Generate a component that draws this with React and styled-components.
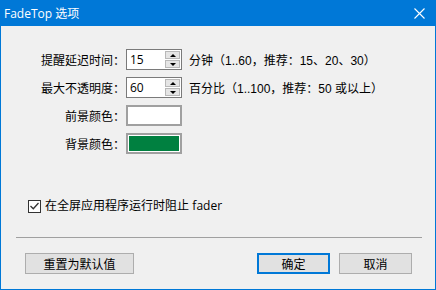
import styled, { createGlobalStyle } from "styled-components";

const GlobalStyle = createGlobalStyle`
  html, body {
    margin: 0;
    padding: 0;
    background: #f0f0f0;
  }
  body {
    font-family: "Liberation Sans", "Noto Sans CJK SC", sans-serif;
    font-size: 12px;
    color: #000;
  }
`;

const Window = styled.div`
  width: 436px;
  height: 290px;
  box-sizing: border-box;
  background: #f0f0f0;
  border: 1px solid #0078d7;
  border-top: none;
  display: flex;
  flex-direction: column;
  overflow: hidden;
`;

const TitleBar = styled.div`
  height: 26px;
  margin: 0 -1px;
  background: #0078d7;
  color: #fff;
  display: flex;
  align-items: center;
  justify-content: space-between;
  padding: 0 11px 0 4px;
  font-family: "Open Sans", "Noto Sans CJK SC", sans-serif;
  font-size: 12px;
  flex-shrink: 0;
`;

const CloseButton = styled.svg`
  width: 11px;
  height: 11px;
  margin-top: 1px;
`;

const Body = styled.div`
  flex: 1;
  display: flex;
  flex-direction: column;
  padding: 23px 13px 0 14px;
`;

const FormGrid = styled.div`
  display: grid;
  grid-template-columns: 100px 56px auto;
  column-gap: 11px;
  row-gap: 7px;
  align-items: center;
  grid-auto-rows: 21px;
`;

const Label = styled.div`
  text-align: right;
  margin-right: -10px;
  white-space: nowrap;
`;

const Hint = styled.div`
  margin-left: -4px;
  white-space: nowrap;
`;

const SpinBox = styled.div`
  height: 21px;
  box-sizing: border-box;
  border: 1px solid #7a7a7a;
  background: #fff;
  display: flex;
  align-items: stretch;
`;

const SpinInput = styled.div`
  flex: 1;
  display: flex;
  align-items: center;
  padding-left: 3px;
  font-family: "Open Sans", sans-serif;
  font-size: 12px;
`;

const Spinner = styled.div`
  width: 15px;
  display: flex;
  flex-direction: column;
  padding: 1px 1px 1px 0;
  gap: 1px;
`;

const SpinButton = styled.div`
  flex: 1;
  background: #e5e5e5;
  border: 1px solid #b8b8b8;
  display: flex;
  align-items: center;
  justify-content: center;
`;

const Arrow = styled.div`
  width: 0;
  height: 0;
  border-left: 3px solid transparent;
  border-right: 3px solid transparent;
  ${(p) =>
    p.$up ? "border-bottom: 3px solid #000;" : "border-top: 3px solid #000;"}
`;

const ColorSwatch = styled.div`
  height: 21px;
  box-sizing: border-box;
  border: 2px solid #a0a0a0;
  padding: 1px;
  background: #fff;
`;

const ColorFill = styled.div`
  width: 100%;
  height: 100%;
  background: ${(p) => p.$color};
`;

const CheckRow = styled.label`
  display: flex;
  align-items: center;
  gap: 4px;
  height: 16px;
  line-height: 16px;
  margin-top: 44px;
  margin-left: 13px;
`;

const CheckBox = styled.span`
  width: 13px;
  height: 13px;
  box-sizing: border-box;
  border: 1px solid #333;
  background: #fff;
  display: flex;
  align-items: center;
  justify-content: center;
`;

const Latin = styled.span`
  font-family: "Open Sans", sans-serif;
`;

const Separator = styled.div`
  height: 1px;
  background: #a0a0a0;
  margin: 23px 0 0 1px;
`;

const ButtonRow = styled.div`
  display: flex;
  align-items: center;
  gap: 9px;
  margin-top: 15px;
  padding-left: 10px;
  padding-right: 10px;
`;

const Button = styled.div`
  width: ${(p) => p.$width}px;
  height: 21px;
  box-sizing: border-box;
  background: #e1e1e1;
  border: ${(p) => (p.$primary ? "2px solid #0078d7" : "1px solid #adadad")};
  display: flex;
  align-items: center;
  justify-content: center;
  font-size: 12px;
`;

const Spacer = styled.div`
  flex: 1;
`;

const SpinField = ({ value }) => (
  <SpinBox>
    <SpinInput>{value}</SpinInput>
    <Spinner>
      <SpinButton>
        <Arrow $up />
      </SpinButton>
      <SpinButton>
        <Arrow />
      </SpinButton>
    </Spinner>
  </SpinBox>
);

const App = () => {
  return (
    <>
      <GlobalStyle />
      <Window>
        <TitleBar>
          <span>FadeTop 选项</span>
          <CloseButton viewBox="0 0 11 11">
            <path d="M0.5 0.5 L10.5 10.5 M10.5 0.5 L0.5 10.5" stroke="#fff" strokeWidth="1.1" />
          </CloseButton>
        </TitleBar>
        <Body>
          <FormGrid>
            <Label>提醒延迟时间：</Label>
            <SpinField value="15" />
            <Hint>分钟（1..60，推荐：15、20、30）</Hint>

            <Label>最大不透明度：</Label>
            <SpinField value="60" />
            <Hint>百分比（1..100，推荐：50 或以上）</Hint>

            <Label>前景颜色：</Label>
            <ColorSwatch>
              <ColorFill $color="#ffffff" />
            </ColorSwatch>
            <span />

            <Label>背景颜色：</Label>
            <ColorSwatch>
              <ColorFill $color="#008040" />
            </ColorSwatch>
            <span />
          </FormGrid>

          <CheckRow>
            <CheckBox>
              <svg width="9" height="8" viewBox="0 0 9 8">
                <path d="M0.5 4 L3.3 6.8 L8.5 1" stroke="#333" strokeWidth="1.3" fill="none" />
              </svg>
            </CheckBox>
            <span>
              在全屏应用程序运行时阻止 <Latin>fader</Latin>
            </span>
          </CheckRow>

          <Separator />

          <ButtonRow>
            <Button $width={109}>重置为默认值</Button>
            <Spacer />
            <Button $width={73} $primary>
              确定
            </Button>
            <Button $width={73}>取消</Button>
          </ButtonRow>
        </Body>
      </Window>
    </>
  );
};

export default App;
